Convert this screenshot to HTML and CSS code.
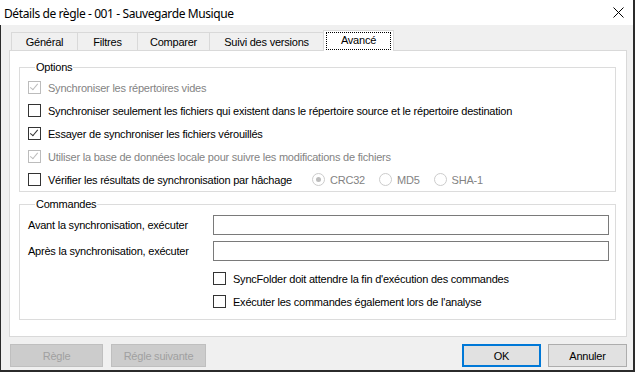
FILE: index.html
```html
<!DOCTYPE html>
<html lang="fr">
<head>
    <meta charset="UTF-8">
    <meta name="viewport" content="width=device-width, initial-scale=1.0">
    <title>Détails de règle</title>
    <link rel="stylesheet" href="styles.css">
</head>
<body>
    <div class="window">
        <div class="titlebar">
            <span class="title">Détails de règle - 001 - Sauvegarde Musique</span>
            <svg class="close" width="11" height="11" viewBox="0 0 11 11">
                <path d="M0.5 0.5 L10.5 10.5 M10.5 0.5 L0.5 10.5" stroke="#000" stroke-width="1" fill="none"/>
            </svg>
        </div>

        <div class="client">
            <div class="tabs">
                <div class="tab tab-general">Général</div>
                <div class="tab tab-filtres">Filtres</div>
                <div class="tab tab-comparer">Comparer</div>
                <div class="tab tab-suivi">Suivi des versions</div>
                <div class="tab active"><span class="focus">Avancé</span></div>
            </div>

            <div class="page">
                <fieldset class="group options">
                    <legend>Options</legend>

                    <div class="row disabled">
                        <span class="check checked"></span>
                        <span>Synchroniser les répertoires vides</span>
                    </div>
                    <div class="row">
                        <span class="check"></span>
                        <span>Synchroniser seulement les fichiers qui existent dans le répertoire source et le répertoire destination</span>
                    </div>
                    <div class="row">
                        <span class="check checked"></span>
                        <span>Essayer de synchroniser les fichiers vérouillés</span>
                    </div>
                    <div class="row disabled">
                        <span class="check checked"></span>
                        <span>Utiliser la base de données locale pour suivre les modifications de fichiers</span>
                    </div>
                    <div class="row">
                        <div class="hash-label">
                            <span class="check"></span>
                            <span>Vérifier les résultats de synchronisation par hâchage</span>
                        </div>
                        <div class="radios">
                            <span class="radio-item"><span class="radio selected"></span>CRC32</span>
                            <span class="radio-item"><span class="radio"></span>MD5</span>
                            <span class="radio-item"><span class="radio"></span>SHA-1</span>
                        </div>
                    </div>
                </fieldset>

                <fieldset class="group commands">
                    <legend>Commandes</legend>

                    <div class="field">
                        <label for="avant">Avant la synchronisation, exécuter</label>
                        <input type="text" id="avant">
                    </div>
                    <div class="field">
                        <label for="apres">Après la synchronisation, exécuter</label>
                        <input type="text" id="apres">
                    </div>
                    <div class="row indented">
                        <span class="check"></span>
                        <span>SyncFolder doit attendre la fin d'exécution des commandes</span>
                    </div>
                    <div class="row indented">
                        <span class="check"></span>
                        <span>Exécuter les commandes également lors de l'analyse</span>
                    </div>
                </fieldset>
            </div>

            <div class="buttons">
                <button class="btn btn-rule" disabled>Règle</button>
                <button class="btn btn-next" disabled>Régle suivante</button>
                <span class="spacer"></span>
                <button class="btn btn-ok">OK</button>
                <button class="btn btn-cancel">Annuler</button>
            </div>
        </div>
    </div>
</body>
</html>
```

FILE: styles.css
```css
body {
    margin: 0;
    padding: 0;
    font-family: "Liberation Sans", Arial, sans-serif;
    font-size: 11px;
    letter-spacing: -0.22px;
    color: #000;
}

.window {
    width: 635px;
    height: 372px;
    box-sizing: border-box;
    border-right: 2px solid #2b2b2b;
    background-color: #fff;
    display: flex;
    flex-direction: column;
}

.titlebar {
    height: 25px;
    flex: none;
    display: flex;
    align-items: center;
    justify-content: space-between;
    padding: 0 9px 0 4px;
    background-color: #fff;
}

.title {
    font-family: "Noto Sans", sans-serif;
    font-size: 12px;
    letter-spacing: -0.4px;
    padding-top: 1px;
}

.close {
    display: block;
}

.client {
    flex: 1;
    display: flex;
    flex-direction: column;
    background-color: #f0f0f0;
    border-left: 1px solid #2b2b2b;
    border-bottom: 2px solid #2b2b2b;
    padding: 5px 6px 0 8px;
}

.tabs {
    height: 20px;
    display: flex;
    align-items: flex-end;
    padding-left: 2px;
}

.tab {
    height: 18px;
    box-sizing: border-box;
    border: 1px solid #d9d9d9;
    border-bottom: none;
    margin-right: -1px;
    display: flex;
    align-items: center;
    justify-content: center;
    padding-top: 1px;
}

.tab-general { width: 67px; }
.tab-filtres { width: 61px; }
.tab-comparer { width: 73px; }
.tab-suivi { width: 115px; }

.tab.active {
    width: 71px;
    height: 21px;
    margin-bottom: -1px;
    background-color: #fff;
    position: relative;
    z-index: 1;
    padding: 0 2px 2px;
    align-items: flex-start;
}

.focus {
    display: block;
    width: 100%;
    height: 18px;
    box-sizing: border-box;
    border: 1px dotted #000;
    text-align: center;
    line-height: 14px;
    margin-top: 1px;
}

.page {
    height: 287px;
    box-sizing: border-box;
    border: 1px solid #d9d9d9;
    background-color: #fff;
    padding: 10px 10px 0 9px;
}

.group {
    margin: 0;
    padding: 0 6px 0 8px;
    border: 1px solid #dcdcdc;
}

.group legend {
    padding: 0 1px;
    margin-left: 7px;
    line-height: 13px;
}

.options {
    padding-top: 2px;
}

.commands {
    margin-top: 6px;
    padding-top: 4px;
    padding-bottom: 6px;
}

.row {
    height: 23px;
    display: flex;
    align-items: center;
}

.row.disabled {
    color: #838383;
}

.check {
    width: 13px;
    height: 13px;
    box-sizing: border-box;
    border: 1px solid #333;
    margin-right: 7px;
    flex: none;
    position: relative;
}

.row.disabled .check {
    border-color: #bcbcbc;
}

.check.checked::after {
    content: "";
    position: absolute;
    left: 3px;
    top: 0px;
    width: 3px;
    height: 7px;
    border: solid #333;
    border-width: 0 1px 1px 0;
    transform: rotate(40deg);
}

.row.disabled .check.checked::after {
    border-color: #bcbcbc;
}

.hash-label {
    width: 284px;
    display: flex;
    align-items: center;
}

.radios {
    display: flex;
    align-items: center;
    color: #838383;
}

.radio-item {
    display: flex;
    align-items: center;
    margin-right: 14px;
}

.radio {
    width: 13px;
    height: 13px;
    box-sizing: border-box;
    border: 1px solid #cccccc;
    border-radius: 50%;
    margin-right: 5px;
    position: relative;
}

.radio.selected::after {
    content: "";
    position: absolute;
    left: 3px;
    top: 3px;
    width: 5px;
    height: 5px;
    border-radius: 50%;
    background-color: #bcbcbc;
}

.field {
    display: flex;
    align-items: center;
    margin-bottom: 6px;
}

.field label {
    width: 185px;
    flex: none;
}

.field input {
    width: 396px;
    height: 20px;
    box-sizing: border-box;
    border: 1px solid #7a7a7a;
    margin: 0;
    padding: 0 3px;
    font: inherit;
}

.row.indented {
    padding-left: 185px;
}

.field + .row.indented {
    margin-top: 1px;
}

.buttons {
    display: flex;
    align-items: center;
    padding: 7px 0 0 1px;
}

.btn {
    height: 23px;
    box-sizing: border-box;
    font: inherit;
    letter-spacing: inherit;
    background-color: #e1e1e1;
    border: 1px solid #adadad;
    color: #000;
    padding: 0;
}

.btn:disabled {
    background-color: #cccccc;
    border-color: #bfbfbf;
    color: #a0a0a0;
}

.btn-rule { width: 93px; }
.btn-next { width: 95px; margin-left: 8px; }

.spacer {
    flex: 1;
}

.btn-ok {
    width: 79px;
    border: 2px solid #0078d7;
    margin-right: 7px;
}

.btn-cancel {
    width: 79px;
}
```
